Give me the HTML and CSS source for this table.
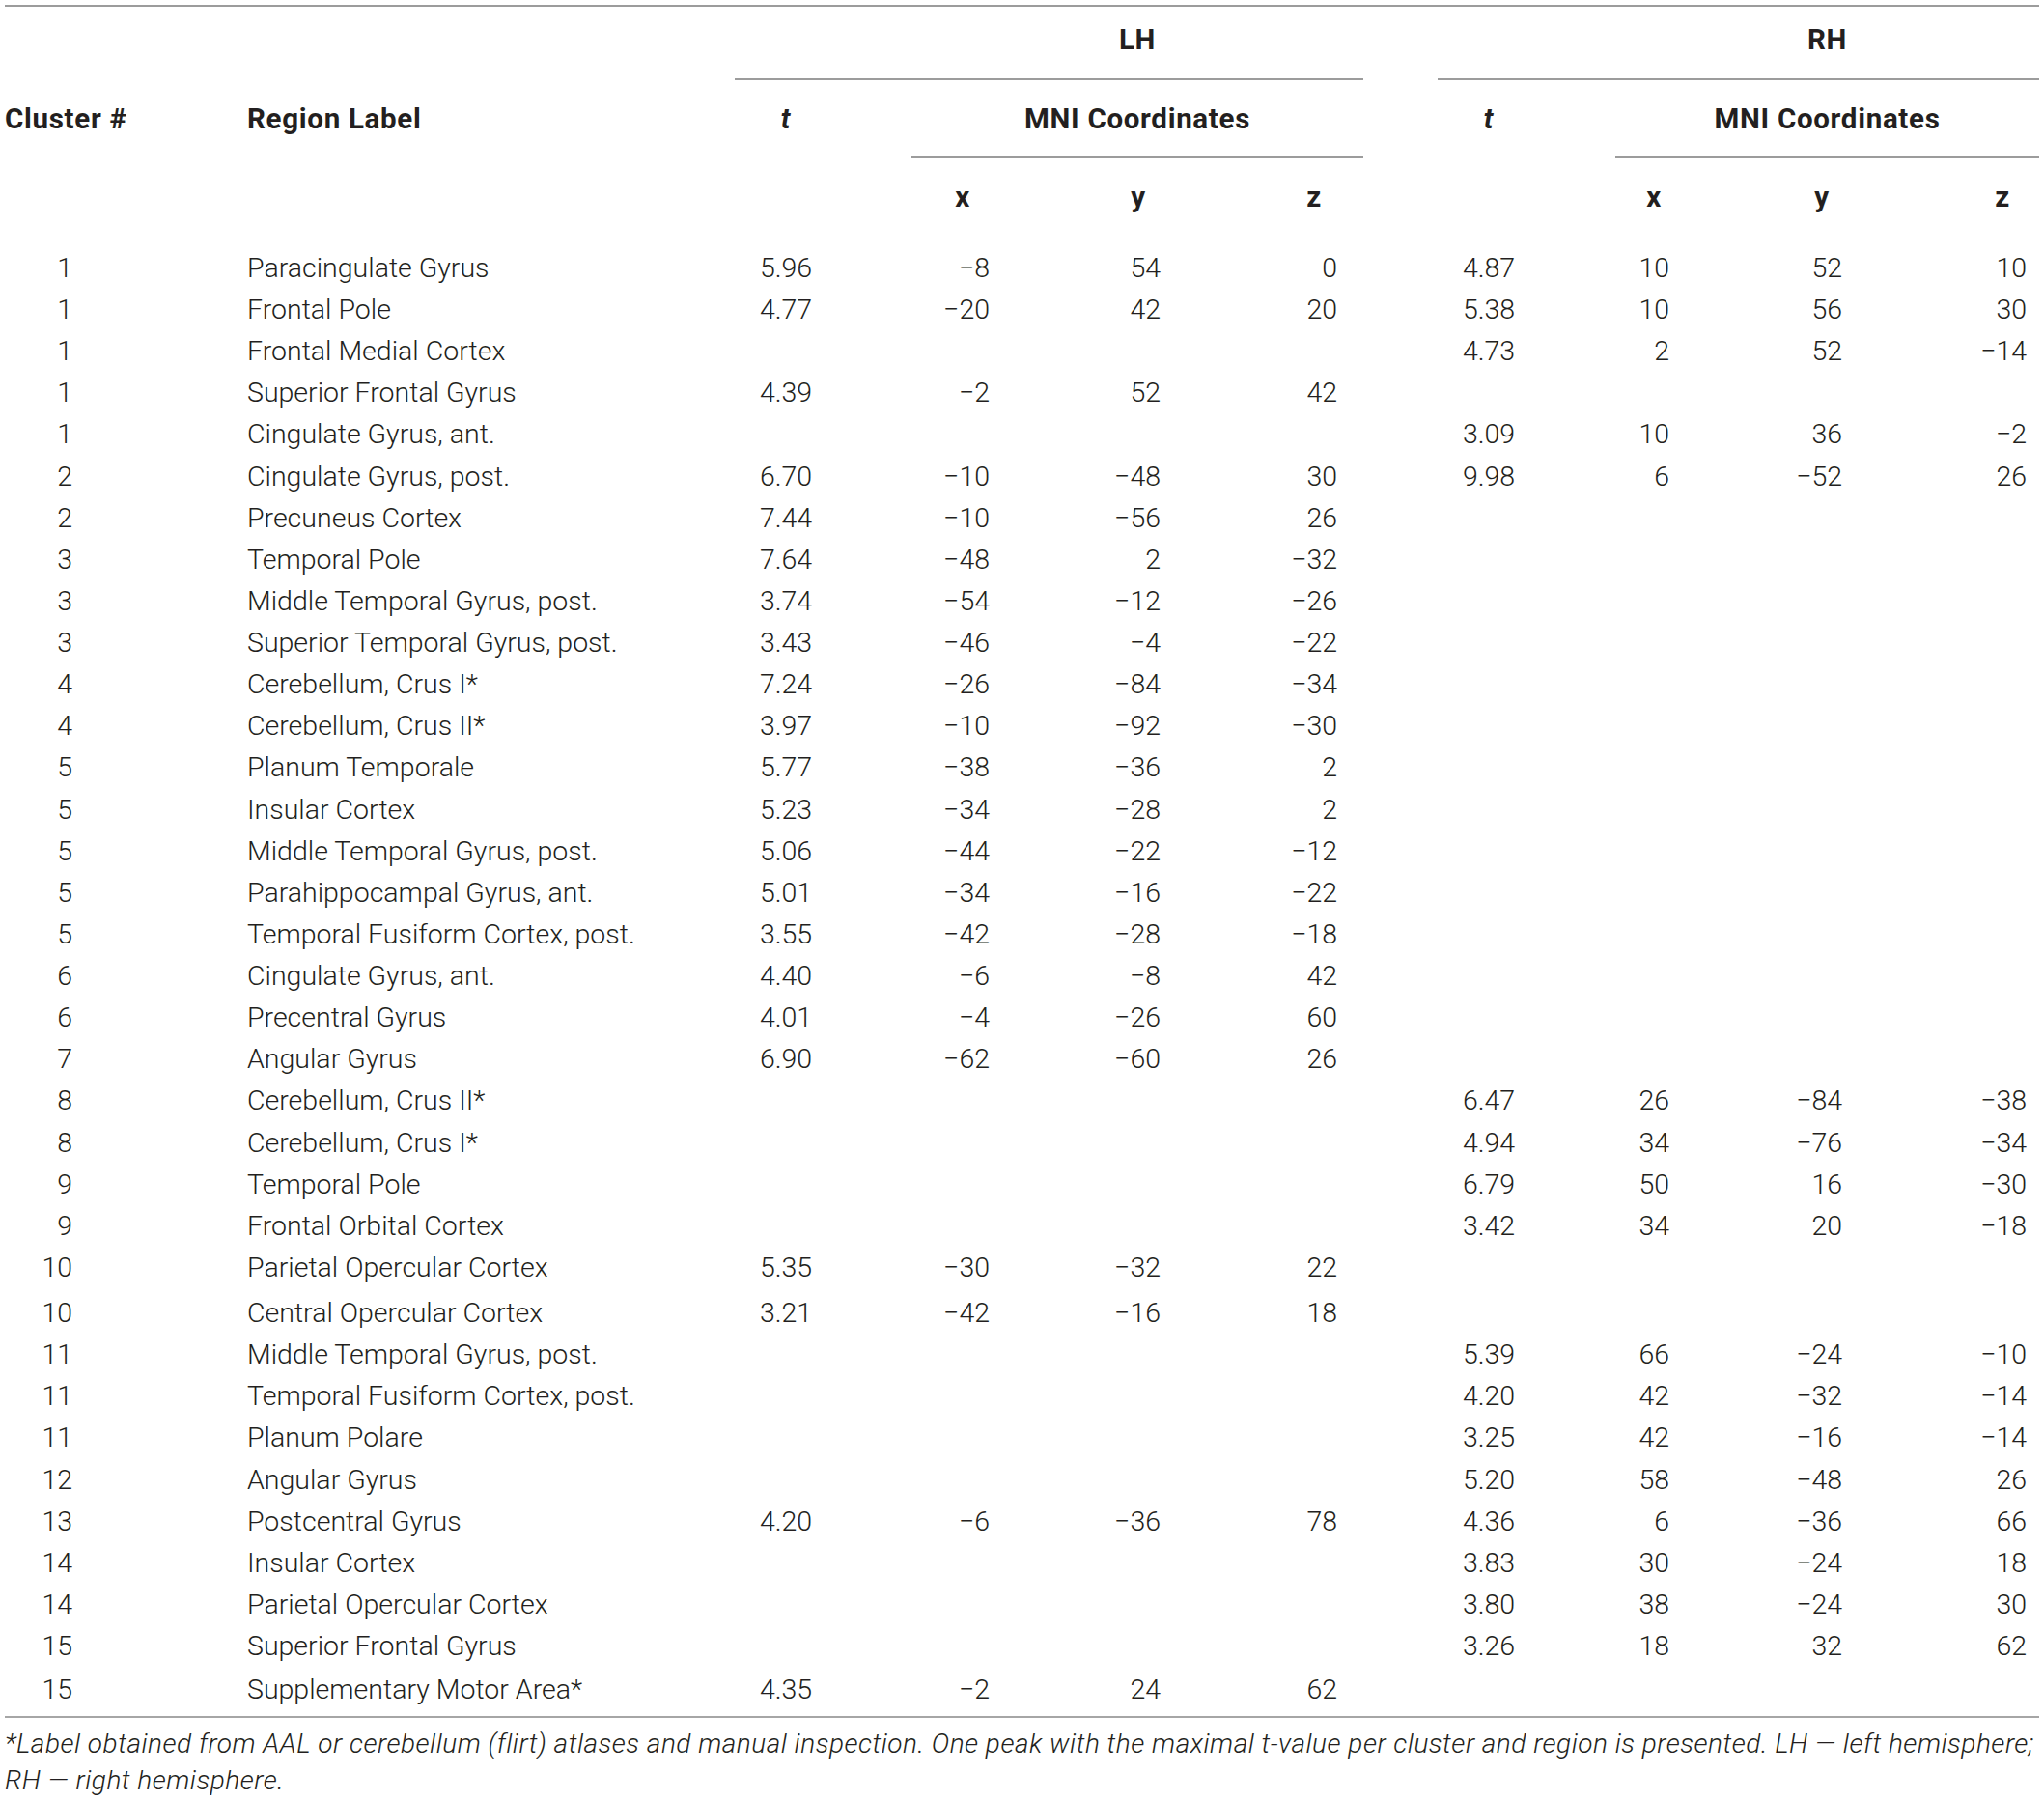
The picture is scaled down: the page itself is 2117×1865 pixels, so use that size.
FILE: index.html
```html
<!DOCTYPE html>
<html lang="en">
<head>
<meta charset="utf-8">
<title>Peak clusters</title>
<link rel="stylesheet" href="styles.css">
</head>
<body>
<div class="wrap">
<table class="peaks">
<colgroup>
<col class="c-cl"><col class="c-reg"><col class="c-t"><col class="c-x"><col class="c-y"><col class="c-z"><col class="c-gap"><col class="c-t2"><col class="c-x2"><col class="c-y2"><col class="c-z2">
</colgroup>
<thead>
<tr class="row-a">
<th></th><th></th>
<th colspan="4" class="hemi hemi-l ruled">LH</th>
<th></th>
<th colspan="4" class="hemi hemi-r ruled">RH</th>
</tr>
<tr class="row-b">
<th class="h-cl">Cluster #</th>
<th class="h-reg">Region Label</th>
<th class="h-t"><em>t</em></th>
<th colspan="3" class="mni ruled">MNI Coordinates</th>
<th></th>
<th class="h-t2"><em>t</em></th>
<th colspan="3" class="mni ruled">MNI Coordinates</th>
</tr>
<tr class="row-c">
<th></th><th></th><th></th>
<th class="h-x">x</th><th class="h-y">y</th><th class="h-z">z</th>
<th></th><th></th>
<th class="h-x2">x</th><th class="h-y2">y</th><th class="h-z2">z</th>
</tr>
</thead>
<tbody>
<tr><td>1</td><td>Paracingulate Gyrus</td><td>5.96</td><td>−8</td><td>54</td><td>0</td><td></td><td>4.87</td><td>10</td><td>52</td><td>10</td></tr>
<tr><td>1</td><td>Frontal Pole</td><td>4.77</td><td>−20</td><td>42</td><td>20</td><td></td><td>5.38</td><td>10</td><td>56</td><td>30</td></tr>
<tr><td>1</td><td>Frontal Medial Cortex</td><td></td><td></td><td></td><td></td><td></td><td>4.73</td><td>2</td><td>52</td><td>−14</td></tr>
<tr><td>1</td><td>Superior Frontal Gyrus</td><td>4.39</td><td>−2</td><td>52</td><td>42</td><td></td><td></td><td></td><td></td><td></td></tr>
<tr><td>1</td><td>Cingulate Gyrus, ant.</td><td></td><td></td><td></td><td></td><td></td><td>3.09</td><td>10</td><td>36</td><td>−2</td></tr>
<tr><td>2</td><td>Cingulate Gyrus, post.</td><td>6.70</td><td>−10</td><td>−48</td><td>30</td><td></td><td>9.98</td><td>6</td><td>−52</td><td>26</td></tr>
<tr><td>2</td><td>Precuneus Cortex</td><td>7.44</td><td>−10</td><td>−56</td><td>26</td><td></td><td></td><td></td><td></td><td></td></tr>
<tr><td>3</td><td>Temporal Pole</td><td>7.64</td><td>−48</td><td>2</td><td>−32</td><td></td><td></td><td></td><td></td><td></td></tr>
<tr><td>3</td><td>Middle Temporal Gyrus, post.</td><td>3.74</td><td>−54</td><td>−12</td><td>−26</td><td></td><td></td><td></td><td></td><td></td></tr>
<tr><td>3</td><td>Superior Temporal Gyrus, post.</td><td>3.43</td><td>−46</td><td>−4</td><td>−22</td><td></td><td></td><td></td><td></td><td></td></tr>
<tr><td>4</td><td>Cerebellum, Crus I*</td><td>7.24</td><td>−26</td><td>−84</td><td>−34</td><td></td><td></td><td></td><td></td><td></td></tr>
<tr><td>4</td><td>Cerebellum, Crus II*</td><td>3.97</td><td>−10</td><td>−92</td><td>−30</td><td></td><td></td><td></td><td></td><td></td></tr>
<tr><td>5</td><td>Planum Temporale</td><td>5.77</td><td>−38</td><td>−36</td><td>2</td><td></td><td></td><td></td><td></td><td></td></tr>
<tr><td>5</td><td>Insular Cortex</td><td>5.23</td><td>−34</td><td>−28</td><td>2</td><td></td><td></td><td></td><td></td><td></td></tr>
<tr><td>5</td><td>Middle Temporal Gyrus, post.</td><td>5.06</td><td>−44</td><td>−22</td><td>−12</td><td></td><td></td><td></td><td></td><td></td></tr>
<tr><td>5</td><td>Parahippocampal Gyrus, ant.</td><td>5.01</td><td>−34</td><td>−16</td><td>−22</td><td></td><td></td><td></td><td></td><td></td></tr>
<tr><td>5</td><td>Temporal Fusiform Cortex, post.</td><td>3.55</td><td>−42</td><td>−28</td><td>−18</td><td></td><td></td><td></td><td></td><td></td></tr>
<tr><td>6</td><td>Cingulate Gyrus, ant.</td><td>4.40</td><td>−6</td><td>−8</td><td>42</td><td></td><td></td><td></td><td></td><td></td></tr>
<tr><td>6</td><td>Precentral Gyrus</td><td>4.01</td><td>−4</td><td>−26</td><td>60</td><td></td><td></td><td></td><td></td><td></td></tr>
<tr><td>7</td><td>Angular Gyrus</td><td>6.90</td><td>−62</td><td>−60</td><td>26</td><td></td><td></td><td></td><td></td><td></td></tr>
<tr><td>8</td><td>Cerebellum, Crus II*</td><td></td><td></td><td></td><td></td><td></td><td>6.47</td><td>26</td><td>−84</td><td>−38</td></tr>
<tr><td>8</td><td>Cerebellum, Crus I*</td><td></td><td></td><td></td><td></td><td></td><td>4.94</td><td>34</td><td>−76</td><td>−34</td></tr>
<tr><td>9</td><td>Temporal Pole</td><td></td><td></td><td></td><td></td><td></td><td>6.79</td><td>50</td><td>16</td><td>−30</td></tr>
<tr><td>9</td><td>Frontal Orbital Cortex</td><td></td><td></td><td></td><td></td><td></td><td>3.42</td><td>34</td><td>20</td><td>−18</td></tr>
<tr><td>10</td><td>Parietal Opercular Cortex</td><td>5.35</td><td>−30</td><td>−32</td><td>22</td><td></td><td></td><td></td><td></td><td></td></tr>
<tr class="row-gap4"><td>10</td><td>Central Opercular Cortex</td><td>3.21</td><td>−42</td><td>−16</td><td>18</td><td></td><td></td><td></td><td></td><td></td></tr>
<tr><td>11</td><td>Middle Temporal Gyrus, post.</td><td></td><td></td><td></td><td></td><td></td><td>5.39</td><td>66</td><td>−24</td><td>−10</td></tr>
<tr><td>11</td><td>Temporal Fusiform Cortex, post.</td><td></td><td></td><td></td><td></td><td></td><td>4.20</td><td>42</td><td>−32</td><td>−14</td></tr>
<tr><td>11</td><td>Planum Polare</td><td></td><td></td><td></td><td></td><td></td><td>3.25</td><td>42</td><td>−16</td><td>−14</td></tr>
<tr><td>12</td><td>Angular Gyrus</td><td></td><td></td><td></td><td></td><td></td><td>5.20</td><td>58</td><td>−48</td><td>26</td></tr>
<tr><td>13</td><td>Postcentral Gyrus</td><td>4.20</td><td>−6</td><td>−36</td><td>78</td><td></td><td>4.36</td><td>6</td><td>−36</td><td>66</td></tr>
<tr><td>14</td><td>Insular Cortex</td><td></td><td></td><td></td><td></td><td></td><td>3.83</td><td>30</td><td>−24</td><td>18</td></tr>
<tr><td>14</td><td>Parietal Opercular Cortex</td><td></td><td></td><td></td><td></td><td></td><td>3.80</td><td>38</td><td>−24</td><td>30</td></tr>
<tr><td>15</td><td>Superior Frontal Gyrus</td><td></td><td></td><td></td><td></td><td></td><td>3.26</td><td>18</td><td>32</td><td>62</td></tr>
<tr class="row-last"><td>15</td><td>Supplementary Motor Area*</td><td>4.35</td><td>−2</td><td>24</td><td>62</td><td></td><td></td><td></td><td></td><td></td></tr>
</tbody>
</table>
<p class="note">*Label obtained from AAL or cerebellum (flirt) atlases and manual inspection. One peak with the maximal t-value per cluster and region is presented. LH — left hemisphere; RH — right hemisphere.</p>
</div>
</body>
</html>
```
FILE: styles.css
```css
html, body {
  margin: 0;
  padding: 0;
  background: #ffffff;
}

body {
  font-family: Roboto, "Liberation Sans", Arial, sans-serif;
  font-weight: 300;
  font-size: 28.5px;
  color: #231f20;
}

.wrap {
  width: 2107px;
  padding: 5px 5px 0 5px;
}

.peaks {
  width: 2107px;
  table-layout: fixed;
  border-collapse: separate;
  border-spacing: 0;
  border-top: 2px solid #9c9c9c;
  border-bottom: 2px solid #a6a6a6;
}

.c-cl { width: 122px; }
.c-reg { width: 634px; }
.c-t { width: 183px; }
.c-x { width: 144px; }
.c-y { width: 182px; }
.c-z { width: 142px; }
.c-gap { width: 77px; }
.c-t2 { width: 184px; }
.c-x2 { width: 137px; }
.c-y2 { width: 150px; }
.c-z2 { width: 152px; }

.peaks th,
.peaks td {
  padding: 0;
  line-height: 43.125px;
  white-space: nowrap;
  vertical-align: top;
  box-sizing: border-box;
}

/* header */
.peaks thead th {
  font-weight: 700;
  font-size: 29.5px;
  letter-spacing: 0.7px;
  text-align: center;
  border-bottom: 2px solid transparent;
}

.peaks thead em {
  font-style: italic;
}

.row-a th {
  padding-top: 13px;
  padding-bottom: 18px;
}

.row-b th {
  padding-top: 19px;
  padding-bottom: 17px;
}

.row-c th {
  padding-top: 19px;
  padding-bottom: 12px;
  border-bottom-color: #a6a6a6;
}

.peaks thead th.ruled {
  border-bottom-color: #9c9c9c;
}

.peaks thead th.hemi-l { padding-left: 183px; }
.peaks thead th.hemi-r { padding-left: 184px; }

.peaks thead th.h-cl { text-align: left; }
.peaks thead th.h-reg { text-align: left; padding-left: 129px; }
.peaks thead th.h-t { padding-right: 77px; }
.peaks thead th.h-x { padding-right: 38px; }
.peaks thead th.h-z { padding-left: 40px; }
.peaks thead th.h-t2 { padding-right: 78px; }
.peaks thead th.h-x2 { padding-right: 57px; }
.peaks thead th.h-y2 { padding-left: 4px; }
.peaks thead th.h-z2 { padding-left: 76px; }

/* body */
.peaks tbody td { text-align: right; }
.peaks tbody td:nth-child(1) { padding-right: 52px; }
.peaks tbody td:nth-child(2) { text-align: left; padding-left: 129px; }
.peaks tbody td:nth-child(3) { text-align: center; padding-right: 77px; }
.peaks tbody td:nth-child(4) { padding-right: 63px; }
.peaks tbody td:nth-child(5) { padding-right: 68px; }
.peaks tbody td:nth-child(6) { padding-right: 27px; }
.peaks tbody td:nth-child(8) { text-align: center; padding-right: 78px; }
.peaks tbody td:nth-child(9) { padding-right: 81px; }
.peaks tbody td:nth-child(10) { padding-right: 52px; }
.peaks tbody td:nth-child(11) { padding-right: 13px; }

.peaks tbody tr:first-child td { padding-top: 15.5px; }
.peaks tbody tr.row-gap4 td { padding-top: 4px; }
.peaks tbody tr.row-last td { padding-top: 2px; padding-bottom: 6px; }

.note {
  margin: 8px 0 0 0;
  font-size: 28px;
  line-height: 38px;
  letter-spacing: 0.5px;
  font-style: italic;
  font-weight: 300;
}
```
